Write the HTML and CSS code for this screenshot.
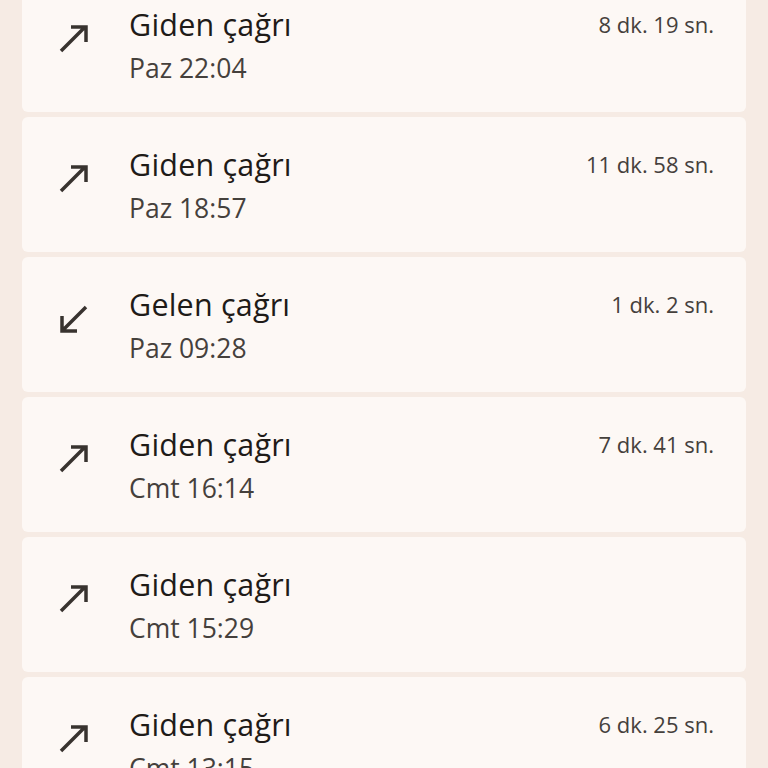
FILE: index.html
```html
<!DOCTYPE html>
<html lang="tr">
<head>
    <meta charset="UTF-8">
    <meta name="viewport" content="width=device-width, initial-scale=1.0">
    <title>Arama geçmişi</title>
    <link rel="stylesheet" href="styles.css">
</head>
<body>
    <div class="call-list">
        <div class="call-card">
            <svg class="call-icon" viewBox="0 0 30 30"><path d="M2 27 L26 3 M12 3 H27 V18"/></svg>
            <div class="call-info">
                <div class="call-title">Giden çağrı</div>
                <div class="call-time">Paz 22:04</div>
            </div>
            <div class="call-duration">8 dk. 19 sn.</div>
        </div>
        <div class="call-card">
            <svg class="call-icon" viewBox="0 0 30 30"><path d="M2 27 L26 3 M12 3 H27 V18"/></svg>
            <div class="call-info">
                <div class="call-title">Giden çağrı</div>
                <div class="call-time">Paz 18:57</div>
            </div>
            <div class="call-duration">11 dk. 58 sn.</div>
        </div>
        <div class="call-card">
            <svg class="call-icon" viewBox="0 0 30 30"><path d="M27 3 L3 27 M3 12 V27 H18"/></svg>
            <div class="call-info">
                <div class="call-title">Gelen çağrı</div>
                <div class="call-time">Paz 09:28</div>
            </div>
            <div class="call-duration">1 dk. 2 sn.</div>
        </div>
        <div class="call-card">
            <svg class="call-icon" viewBox="0 0 30 30"><path d="M2 27 L26 3 M12 3 H27 V18"/></svg>
            <div class="call-info">
                <div class="call-title">Giden çağrı</div>
                <div class="call-time">Cmt 16:14</div>
            </div>
            <div class="call-duration">7 dk. 41 sn.</div>
        </div>
        <div class="call-card">
            <svg class="call-icon" viewBox="0 0 30 30"><path d="M2 27 L26 3 M12 3 H27 V18"/></svg>
            <div class="call-info">
                <div class="call-title">Giden çağrı</div>
                <div class="call-time">Cmt 15:29</div>
            </div>
            <div class="call-duration"></div>
        </div>
        <div class="call-card">
            <svg class="call-icon" viewBox="0 0 30 30"><path d="M2 27 L26 3 M12 3 H27 V18"/></svg>
            <div class="call-info">
                <div class="call-title">Giden çağrı</div>
                <div class="call-time">Cmt 13:15</div>
            </div>
            <div class="call-duration">6 dk. 25 sn.</div>
        </div>
    </div>
</body>
</html>
```

FILE: styles.css
```css
body {
    margin: 0;
    padding: 0;
    background: #f6ebe4;
    font-family: "Open Sans", Roboto, Arial, sans-serif;
    overflow: hidden;
}

.call-list {
    display: flex;
    flex-direction: column;
    gap: 5px;
    padding: 0 22px;
    margin-top: -23px;
}

.call-card {
    display: flex;
    align-items: flex-start;
    height: 135px;
    box-sizing: border-box;
    padding: 29px 32px 0 0;
    background: #fdf8f5;
    border-radius: 6px;
}

.call-icon {
    width: 30px;
    height: 30px;
    margin: 18px 0 0 37px;
    flex-shrink: 0;
    fill: none;
    stroke: #38332f;
    stroke-width: 3.5;
    stroke-linejoin: miter;
}

.call-info {
    flex: 1;
    margin-left: 40px;
}

.call-title {
    font-size: 30.5px;
    line-height: 36px;
    letter-spacing: 0.2px;
    color: #1f1b18;
}

.call-time {
    margin-top: 9px;
    font-size: 26.5px;
    line-height: 34px;
    color: #45403c;
}

.call-duration {
    font-size: 22px;
    line-height: 36px;
    color: #45403c;
}
```
